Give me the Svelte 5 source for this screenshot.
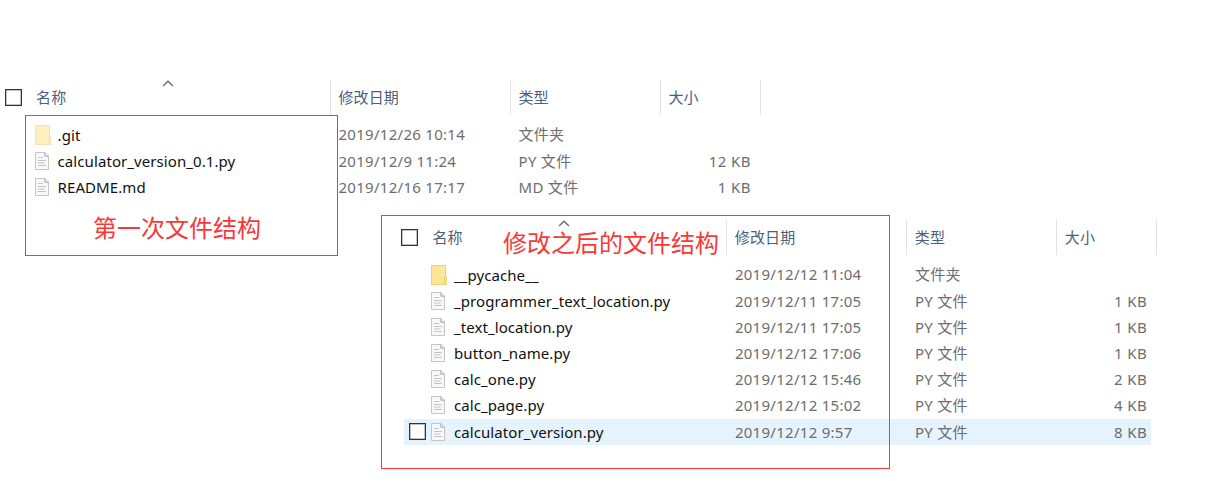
<script>
  const first = [
    { kind: 'hidden', name: '.git', date: '2019/12/26 10:14', type: '文件夹', size: '' },
    { kind: 'file', name: 'calculator_version_0.1.py', date: '2019/12/9 11:24', type: 'PY 文件', size: '12 KB' },
    { kind: 'file', name: 'README.md', date: '2019/12/16 17:17', type: 'MD 文件', size: '1 KB' }
  ];
  const second = [
    { kind: 'folder', name: '__pycache__', date: '2019/12/12 11:04', type: '文件夹', size: '' },
    { kind: 'file', name: '_programmer_text_location.py', date: '2019/12/11 17:05', type: 'PY 文件', size: '1 KB' },
    { kind: 'file', name: '_text_location.py', date: '2019/12/11 17:05', type: 'PY 文件', size: '1 KB' },
    { kind: 'file', name: 'button_name.py', date: '2019/12/12 17:06', type: 'PY 文件', size: '1 KB' },
    { kind: 'file', name: 'calc_one.py', date: '2019/12/12 15:46', type: 'PY 文件', size: '2 KB' },
    { kind: 'file', name: 'calc_page.py', date: '2019/12/12 15:02', type: 'PY 文件', size: '4 KB' },
    { kind: 'file', name: 'calculator_version.py', date: '2019/12/12 9:57', type: 'PY 文件', size: '8 KB', active: true }
  ];
</script>

{#snippet icon(kind)}
  {#if kind === 'file'}
    <svg class="icon" width="16" height="20" viewBox="0 0 16 20">
      <path d="M1.5 1.5H11L14.5 5V18.5H1.5Z" fill="#f8f8f8" stroke="#c3c5c6" />
      <path d="M10.8 1.5V5.2H14.5" fill="#e4e5e6" stroke="#a9abad" />
      <path d="M4 6.5H9M4 9.5H12M4 12H10.5M4 14.5H12" stroke="#c3c5c6" fill="none" />
    </svg>
  {:else}
    <svg class="icon folder" class:faded={kind === 'hidden'} width="17" height="20" viewBox="0 0 17 20">
      <path d="M0 0H15V11.5H16V20H0Z" fill="#efd078" />
      <path d="M1 1H14V11.5L13 13V19H1Z" fill="#ffe598" />
      <path d="M14 13H15.2V19H14Z" fill="#ffe08a" />
    </svg>
  {/if}
{/snippet}

{#snippet listing(rows, cls)}
  <section class="listing {cls}">
    <header class="cols">
      <div class="h name">
        <i class="box"></i><span>名称</span>
        <svg class="sort" width="12" height="7" viewBox="0 0 12 7"><path d="M1 6L6 1.2L11 6" fill="none" stroke="#666" stroke-width="1.3" /></svg>
      </div>
      <div class="h">修改日期</div>
      <div class="h">类型</div>
      <div class="h">大小</div>
    </header>
    <div class="rows">
      {#each rows as r}
        <div class="cols row" class:active={r.active}>
          <div class="file">
            <span class="pick">{#if r.active}<i class="box"></i>{/if}</span>
            {@render icon(r.kind)}
            <span class="label">{r.name}</span>
          </div>
          <div class="date">{r.date}</div>
          <div class="type">{r.type}</div>
          <div class="size">{r.size}</div>
        </div>
      {/each}
    </div>
  </section>
{/snippet}

<main>
  {@render listing(first, 'before')}
  {@render listing(second, 'after')}
  <div class="frame one"><span>第一次文件结构</span></div>
  <div class="frame two"><span>修改之后的文件结构</span></div>
</main>

<style>
  :global(body) { background: #fff; }
  main {
    position: relative;
    box-sizing: border-box;
    width: 1226px;
    height: 491px;
    padding-top: 80px;
    overflow: hidden;
    font-family: "Noto Sans", "Noto Sans CJK SC", sans-serif;
    font-size: 15px;
    color: #6d6d6d;
    white-space: nowrap;
  }
  .listing { width: 761px; }
  .before { height: 140px; }
  .after { margin-left: 396.4px; }
  .cols {
    display: grid;
    grid-template-columns: 330px 180px 150px 101px;
  }
  .h {
    box-sizing: border-box;
    height: 35px;
    padding-left: 7.4px;
    border-left: 1px solid #e3e3e3;
    line-height: 34px;
    letter-spacing: 0.15px;
    color: #4c607a;
  }
  .h:last-child { border-right: 1px solid #e3e3e3; }
  .h.name {
    position: relative;
    display: flex;
    align-items: center;
    gap: 14px;
    border-left: 0;
    padding-left: 5px;
  }
  .h.name span { margin-top: -1px; }
  .box {
    box-sizing: border-box;
    display: block;
    width: 17px;
    height: 17px;
    border: 1.5px solid #333;
    background: #fff;
    box-shadow: inset 0 0 0 0.5px #888;
  }
  .sort { position: absolute; left: 162px; top: 0; }
  .rows { padding-top: 6.45px; }
  .row {
    height: 26.2px;
    line-height: 26px;
  }
  .active {
    background: linear-gradient(#e5f3ff, #e5f3ff) 8px 0 / 747px 100% no-repeat;
  }
  .file { display: flex; align-items: center; color: #111; }
  .pick { width: 34px; box-sizing: border-box; padding-left: 13px; }
  .icon { display: block; margin-right: 7.6px; }
  .icon.folder { margin: 0 5.6px 0 1px; }
  .faded { opacity: 0.6; }
  .label { letter-spacing: 0.08px; }
  .date, .type { padding-left: 8.5px; }
  .date { letter-spacing: 0.28px; }
  .type { letter-spacing: 0.3px; }
  .size { text-align: right; padding-right: 10.2px; letter-spacing: 0.4px; }
  .frame {
    position: absolute;
    box-sizing: border-box;
    border: 1px solid #fa3838;
    color: #fa3838;
    font-size: 24px;
    line-height: 36px;
  }
  .one { left: 25px; top: 115px; width: 313px; height: 141px; padding: 94px 0 0 67px; }
  .two { left: 381px; top: 215px; width: 509px; height: 254px; padding: 9px 0 0 121px; }
</style>
